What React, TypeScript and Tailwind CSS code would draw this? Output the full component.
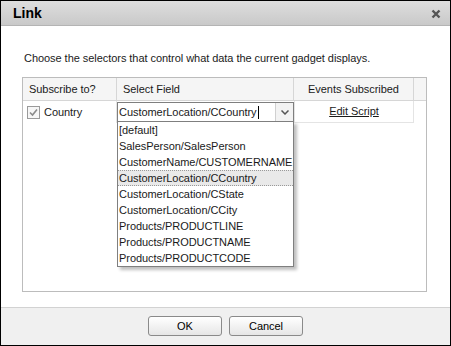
import React from 'react';

const fields = [
  '[default]',
  'SalesPerson/SalesPerson',
  'CustomerName/CUSTOMERNAME',
  'CustomerLocation/CCountry',
  'CustomerLocation/CState',
  'CustomerLocation/CCity',
  'Products/PRODUCTLINE',
  'Products/PRODUCTNAME',
  'Products/PRODUCTCODE',
];

const font = { fontFamily: '"Liberation Sans", Arial, sans-serif' };

export default function App() {
  return (
    <div
      className="w-[451px] h-[346px] bg-white border border-black flex flex-col text-[11px] tracking-[-0.05px] text-[#1a1a1a] overflow-hidden"
      style={font}
    >
      {/* title bar */}
      <div className="h-[25px] shrink-0 flex items-center justify-between pl-[12px] pr-[9px] bg-gradient-to-b from-[#dedede] to-[#c9c9c9] border-b border-[#b4b4b4]">
        <span className="font-bold text-[14px] tracking-normal text-black">Link</span>
        <svg width="10" height="10" viewBox="0 0 10 10" className="mt-[1px]">
          <path d="M1.5 1.5 L8.5 8.5 M8.5 1.5 L1.5 8.5" stroke="#555" strokeWidth="2.4" />
        </svg>
      </div>

      <div className="flex-1 flex flex-col px-[21px] pt-[24px]">
        <p className="pl-[2px] leading-[16px]">
          Choose the selectors that control what data the current gadget displays.
        </p>

        {/* table */}
        <div className="mt-[11px] w-[405px] h-[215px] border border-[#bcbcbc] flex flex-col">
          <div className="h-[23px] flex bg-[#f5f5f5] border-b border-[#d6d6d6]">
            <div className="w-[94px] px-[6px] flex items-center border-r border-[#d6d6d6]">Subscribe to?</div>
            <div className="w-[177px] px-[6px] flex items-center border-r border-[#d6d6d6]">Select Field</div>
            <div className="w-[120px] flex items-center justify-center border-r border-[#d6d6d6]">Events Subscribed</div>
            <div className="flex-1" />
          </div>
          <div className="h-[22px] flex">
            <div className="w-[94px] pl-[4px] flex items-center gap-[4px] border-r border-[#e4e4e4]">
              <span className="w-[13px] h-[13px] border border-[#9a9a9a] bg-[#f6f6f6] flex items-center justify-center">
                <svg width="9" height="9" viewBox="0 0 9 9">
                  <path d="M1 4.5 L3.5 7 L8 1.5" stroke="#8a8a8a" strokeWidth="1.6" fill="none" />
                </svg>
              </span>
              <span>Country</span>
            </div>
            <div className="w-[177px] relative">
              <div className="absolute left-0 top-[1px] w-[177px] h-[20px] border border-[#7f7f7f] bg-white flex items-center">
                <span className="flex-1 pl-[1px] whitespace-nowrap">
                  CustomerLocation/CCountry<span className="inline-block w-px h-[13px] bg-black align-middle ml-px" />
                </span>
                <span className="w-[18px] h-full border-l border-[#d0d0d0] bg-[#f3f3f3] flex items-center justify-center">
                  <svg width="8" height="5" viewBox="0 0 8 5">
                    <path d="M0.5 0.5 L4 4 L7.5 0.5" stroke="#555" strokeWidth="1.5" fill="none" />
                  </svg>
                </span>
              </div>
              <div className="absolute left-0 top-[20px] w-[177px] h-[146px] border border-[#7f7f7f] bg-white z-10 shadow-[3px_3px_3px_rgba(0,0,0,0.25)]">
                {fields.map((f) => (
                  <div
                    key={f}
                    className={
                      f === 'CustomerLocation/CCountry'
                        ? 'h-[16px] leading-[14px] px-[1px] bg-[#e9e9e9] border-y border-dotted border-[#999] whitespace-nowrap'
                        : 'h-[16px] leading-[16px] px-[1px] whitespace-nowrap'
                    }
                  >
                    {f}
                  </div>
                ))}
              </div>
            </div>
            <div className="w-[120px] flex items-center justify-center border-x border-b border-[#e4e4e4]">
              <span className="underline">Edit Script</span>
            </div>
          </div>
        </div>
      </div>

      {/* footer */}
      <div className="h-[38px] shrink-0 bg-[#f0f0f0] border-t border-[#d2d2d2] flex items-center justify-center gap-[7px] pb-[1px]">
        <button className="w-[74px] h-[20px] rounded-[3px] border border-[#8a8a8a] bg-gradient-to-b from-white to-[#e6e6e6] text-[11px] text-black">
          OK
        </button>
        <button className="w-[74px] h-[20px] rounded-[3px] border border-[#8a8a8a] bg-gradient-to-b from-white to-[#e6e6e6] text-[11px] text-black">
          Cancel
        </button>
      </div>
    </div>
  );
}
